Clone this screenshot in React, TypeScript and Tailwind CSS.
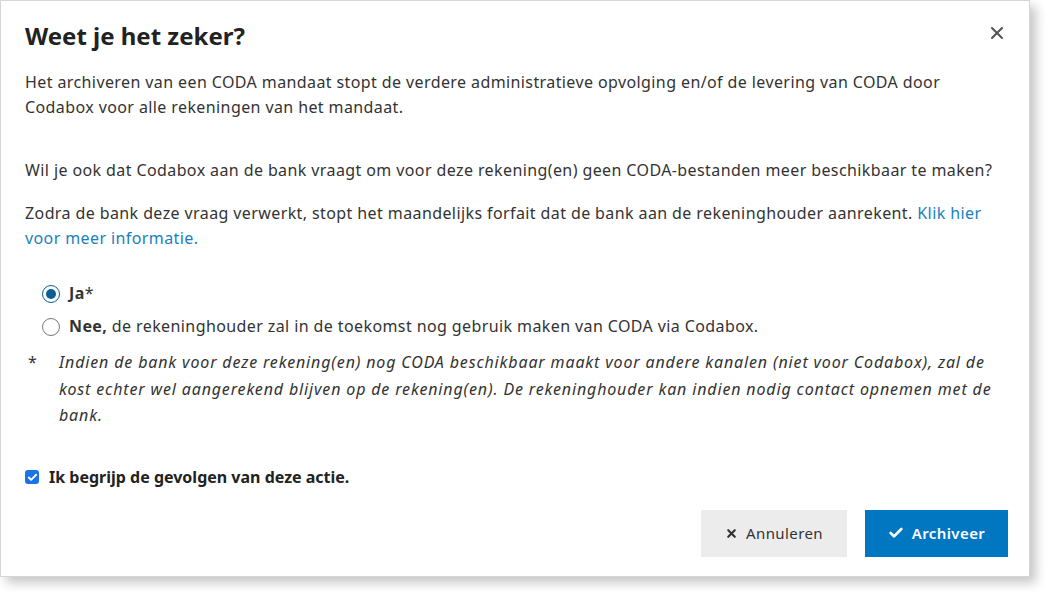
import { X, Check } from 'lucide-react';

export default function App() {
  return (
    <div className="w-[1053px] h-[599px] bg-white" style={{ fontFamily: '"Noto Sans", "Open Sans", sans-serif' }}>
      <div className="relative w-[1030px] h-[577px] bg-white border border-[#d6d6d6] shadow-[6px_6px_10px_rgba(0,0,0,0.22)] px-6 pt-[19px] text-[#333] text-[16px] tracking-[0.4px]">
        <button className="absolute right-[22px] top-[22px] text-[#555]">
          <X className="w-5 h-5" strokeWidth={2.5} />
        </button>
        <h1 className="text-[24px] font-bold leading-8 text-[#222] tracking-normal">Weet je het zeker?</h1>

        <p className="mt-[18px] leading-[25px]">
          Het archiveren van een CODA mandaat stopt de verdere administratieve opvolging en/of de levering van CODA door Codabox voor alle rekeningen van het mandaat.
        </p>

        <p className="mt-[38px] leading-[25px]">
          Wil je ook dat Codabox aan de bank vraagt om voor deze rekening(en) geen CODA-bestanden meer beschikbaar te maken?
        </p>

        <p className="mt-[18px] leading-[25px]">
          Zodra de bank deze vraag verwerkt, stopt het maandelijks forfait dat de bank aan de rekeninghouder aanrekent.{' '}
          <a className="text-[#1a7fc1]">Klik hier voor meer informatie.</a>
        </p>

        <div className="mt-[30px] pl-[17px] flex flex-col gap-2">
          <label className="flex items-center gap-[9px] leading-[25px]">
            <span className="w-[18px] h-[18px] rounded-full border-[1.5px] border-[#0a5f97] flex items-center justify-center">
              <span className="w-[10px] h-[10px] rounded-full bg-[#0a5f97]" />
            </span>
            <span><b>Ja</b>*</span>
          </label>
          <label className="flex items-center gap-[9px] leading-[25px]">
            <span className="w-[18px] h-[18px] rounded-full border border-[#777]" />
            <span><b>Nee,</b> de rekeninghouder zal in de toekomst nog gebruik maken van CODA via Codabox.</span>
          </label>
        </div>

        <div className="mt-[10px] pl-[3px] flex italic leading-[26.5px]">
          <span className="w-[31px] not-italic shrink-0">*</span>
          <span className="tracking-[0.85px]">
            Indien de bank voor deze rekening(en) nog CODA beschikbaar maakt voor andere kanalen (niet voor Codabox), zal de kost echter wel aangerekend blijven op de rekening(en). De rekeninghouder kan indien nodig contact opnemen met de bank.
          </span>
        </div>

        <label className="mt-[36px] flex items-center gap-[10px] leading-[25px]">
          <span className="w-[14px] h-[14px] rounded-[3px] bg-[#1a73e8] flex items-center justify-center">
            <Check className="w-[11px] h-[11px] text-white" strokeWidth={4} />
          </span>
          <b className="text-[#222] tracking-normal">Ik begrijp de gevolgen van deze actie.</b>
        </label>

        <div className="mt-[20px] -mr-[3px] flex justify-end gap-[18px]">
          <button className="w-[146px] h-[47px] bg-[#ececec] text-[#333] flex items-center justify-center gap-2 text-[15px]">
            <X className="w-[13px] h-[13px]" strokeWidth={4} />
            Annuleren
          </button>
          <button className="w-[143px] h-[47px] bg-[#0077c0] text-white font-semibold flex items-center justify-center gap-2 text-[15px]">
            <Check className="w-4 h-4" strokeWidth={4} />
            Archiveer
          </button>
        </div>
      </div>
    </div>
  );
}
